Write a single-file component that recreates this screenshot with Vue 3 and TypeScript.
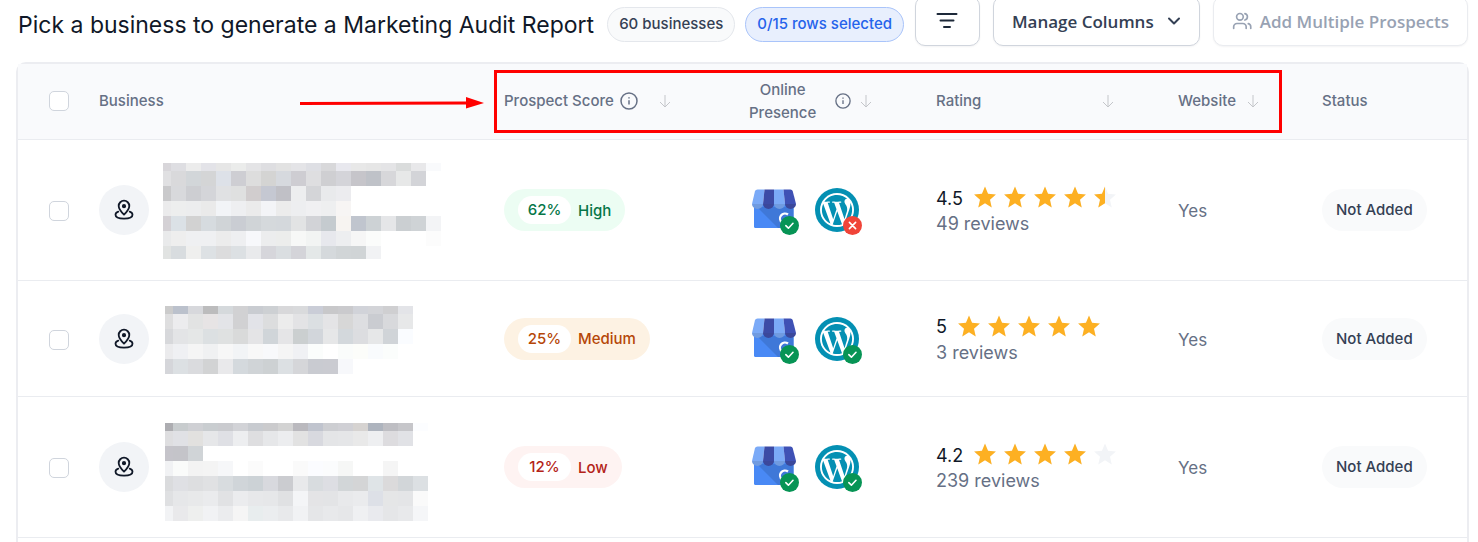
<script setup lang="ts">
import { reactive, ref } from 'vue'

interface Mask {
  x: number
  y: number
  lastHeight: number
  rows: string[]
}

interface Business {
  id: number
  score: number
  level: 'High' | 'Medium' | 'Low'
  wordpressOk: boolean
  rating: number
  reviews: number
  website: string
  status: string
  height: number
  mask: Mask
}

const businesses: Business[] = [
  {
    id: 1, score: 62, level: 'High', wordpressOk: false, rating: 4.5, reviews: 49,
    website: 'Yes', status: 'Not Added', height: 140,
    mask: {
      x: 0, y: 23, lastHeight: 13,
      rows: [
        'd8d6da dedee2 ececec e3e3e8 e6e6e6 ebeceb e4e4e6 dedee1 e2e2e2 e4e4e7 dedfe4 d8d8da e8e8ee e8e8e8 e6e6e6 e4e4e6 dadcdc e8e8ea f9fafc',
        'e0e0e2 d9d9db d2d6d9 d4d5d6 dde1e8 ceced3 dddddd d4d4d3 d6d9de cecdd2 dedee0 cfcfd2 d4d4d9 c6c5ca bfc2c8 d7d7da e7e8e8 d3d4d8',
        'c9c9cb d8d9dc cdced2 d4d5d9 e0e1e3 dfe0e0 d1cdce c5c8d2 c0c0c6 edeeef d4d5d8 e9eaec ececef',
        'ebebec edeeee ecedee eaeaea f2f4f7 eeeff1 ebebeb f3f4f7 ececec edeef0 f0f0f2 eeeff0 f7f5f4',
        'd4d1d5 dbe1e6 d2d2d2 d6dbdf d0d4d7 cacdd3 d0d4d7 d5d9dc d4d8dc e2e3e4 d2d3d7 c5cbcf f7f4f1 c0c5ce cdd2d5 e5e6e8 cbcfd2 cfd3d6 f3f4f6',
        'e9eaeb eeeeee eff0f2 eff0f2 ececec eeeff1 f7f8fb ecedee ecedec f7f8f7 f2f4f3 e7e8ed edeef0 f6f6f6 fbfcfb - - - fcfcfc',
        'e1e3e2 d8dcdf efefee dde1e4 dcdcdd dce0e3 e9eaec d6d6db dadee1 d4d4d9 e4e8e8 d5d9dc d1d5d7 d0d4d6 f1f2f4',
      ],
    },
  },
  {
    id: 2, score: 25, level: 'Medium', wordpressOk: true, rating: 5, reviews: 3,
    website: 'Yes', status: 'Not Added', height: 115,
    mask: {
      x: 2, y: 25, lastHeight: 15,
      rows: [
        'cbcbcb bbc1cc d7d8dc bcbcbd d5d9dc d1d1d3 c9ccd1 cdd0d3 d8d8da d9dadc cacdd7 c8c8ca cacacd d1d3d9 d3d4d8 cfcfd1 e3e4e8',
        'dededf ececee e2e3e3 e7e4e5 e3e4e8 d1d1d3 e2e3e8 dcddde ececec e3e3e5 dbdfe2 e4e4e6 d7d7d7 dddee1 caccd1 d8d9dc e7e8e9',
        'd7d8db e3e4e6 e5e7e7 dce0e2 dfe1e1 d9dada e4e4e6 d0d5d9 e5e5e7 cbcfd0 d2d6db e6e7e8 d3d8dc dcdde0 e6e7e8 d0d4d8 fafcff',
        'ebebed eff0f3 f5f5f5 f0f1f2 f7f7f7 f2f4f6 f8f8f8 f8f9fb f5f5f5 f0f1f4 fbfdfc ffffff fafcfb fcfdfa f9fbfd fbfdfc',
        'd5d6da dce0e3 dadbde d2d3d4 e9e9eb d4d9dd d0d4d7 cdd1d3 dce0e3 d5d6d9 c9cbd1 cacbd1 f7f8fb',
      ],
    },
  },
  {
    id: 3, score: 12, level: 'Low', wordpressOk: true, rating: 4.2, reviews: 239,
    website: 'Yes', status: 'Not Added', height: 140,
    mask: {
      x: 2, y: 26, lastHeight: 15,
      rows: [
        'adadb1 c8ccce cfd0d4 c9cdd0 cacbcf d2d3d7 c8cbd0 cbcbcd d3d3d3 bab9be c0c4ce cdced2 d0d0d5 d6d3d1 aeb4be bebec3 c6c6ca fcfdff',
        'dedee0 e0e1e5 e2e1df e6e7e9 dfe0e5 edeef0 dedee0 e6e7e9 ecedef e2e2e2 d8d9df e4e5e7 e5e6e8 e9e9e9 eeeff1 dddcdf e1e2e6',
        'c5c4ca c4c4c9 d0d4d7',
        'f1f2f4 fafbfa f3f3f3 f4f4f4 f6f7f9 - fbfbfb - - fafafa fbfcff fbfcfd f6f7f6 - - f5f5f5',
        'dadbdd dfe0e4 dddee0 e0e1e3 d8dcdf d0d5d9 ccd2d6 d8d9de cbccd0 e8e9eb d8dcdf dddee3 d2d6d8 d4d5d6 dfe4e7 dbdadb d2d6d9 dce0e3',
        'dfe0e2 e6e7e9 e8e9ea eaebed e1e2e4 ebecee e7e8ea e6e7e9 e0e1e3 f4f5f7 e4e4e6 e3e4e6 e8e9eb eaebed dde0e7 e5e6e7 e4e5e7 fafafa',
        'f2f3f5 e9e9eb eeefee f1f2f4 ebecee f5f5f5 e8edee ebedef e8e9eb f1f2f4 e5e6e8 e8e9eb e6e7e9 eff0f2 e9eaee e5e6e8 e8e9eb f5f6f8',
      ],
    },
  },
]

const maskTiles = (mask: Mask) =>
  mask.rows.flatMap((row, r) =>
    row.split(' ').map((color, c) => ({
      key: `${r}-${c}`,
      x: mask.x + (c ? c * 15 - 7 : 0),
      y: mask.y + (r ? r * 15 - 7 : 0),
      w: c ? 15 : 8,
      h: r === 0 ? 8 : r === mask.rows.length - 1 ? mask.lastHeight : 15,
      fill: color === '-' ? 'none' : `#${color}`,
    })),
  )

const starFill = (rating: number, n: number) => {
  const part = rating - n + 1
  return part >= 1 ? 24 : part >= 0.5 ? 12 : 0
}

const star = 'M12 0.6 15.3 8.4 23.8 9.2 17.4 14.8 19.3 23.2 12 18.8 4.7 23.2 6.6 14.8 0.2 9.2 8.7 8.4Z'

const allSelected = ref(false)
const selected = reactive<Record<number, boolean>>({})
</script>

<template>
  <main class="page">
    <header class="toolbar">
      <h1>Pick a business to generate a Marketing Audit Report</h1>
      <span class="chip">60 businesses</span>
      <span class="chip chip-blue">0/15 rows selected</span>
      <div class="actions">
        <button type="button" class="btn btn-filter" aria-label="Filter">
          <svg width="24" height="24" viewBox="0 0 24 24" fill="none" stroke="#1d2939" stroke-width="2" stroke-linecap="round"><path d="M2.5 5h19M5.5 11.500h13M9 18h6" /></svg>
        </button>
        <button type="button" class="btn btn-columns">
          Manage Columns
          <svg width="14" height="14" viewBox="0 0 14 14" fill="none" stroke="#344054" stroke-width="2" stroke-linecap="round" stroke-linejoin="round"><path d="M2 4.5 7 9.5 12 4.5" /></svg>
        </button>
        <button type="button" class="btn btn-add" disabled>
          <svg width="20" height="20" viewBox="0 0 24 24" fill="none" stroke="#98a2b3" stroke-width="2" stroke-linecap="round" stroke-linejoin="round"><path d="M17 21v-2a4 4 0 0 0-4-4H6a4 4 0 0 0-4 4v2M22.500 21v-2a4 4 0 0 0-3-3.870M15.500 3.130a4 4 0 0 1 0 7.750" /><circle cx="9.500" cy="7" r="4" /></svg>
          Add Multiple Prospects
        </button>
      </div>
    </header>

    <section class="card">
      <svg class="pointer" width="184" height="14" viewBox="0 0 184 14"><path d="M0 7.500 167 7" stroke="#f00" stroke-width="3" /><path d="M166 1 184 7 166 12.500Z" fill="#f00" /></svg>
      <div class="highlight"></div>
      <table>
        <colgroup>
          <col class="c-check" /><col /><col class="c-score" /><col class="c-online" /><col class="c-rating" /><col class="c-website" /><col class="c-status" />
        </colgroup>
        <thead>
          <tr>
            <th class="check"><input v-model="allSelected" type="checkbox" aria-label="Select all rows" /></th>
            <th>Business</th>
            <th>
              <div class="head">
                Prospect Score
                <svg class="info info-lg" viewBox="0 0 18 18"><circle cx="9" cy="9" r="8" /><path d="M9 8.200v4.300M9 5.200v1.300" /></svg>
                <svg class="sort sort-score" viewBox="0 0 12 14"><path d="M6 1v12M1 8l5 5 5-5" /></svg>
              </div>
            </th>
            <th>
              <div class="head">
                <span class="two-line">Online<br />Presence</span>
                <svg class="info info-sm" viewBox="0 0 18 18"><circle cx="9" cy="9" r="8" /><path d="M9 8.200v4.300M9 5.200v1.300" /></svg>
                <svg class="sort sort-online" viewBox="0 0 12 14"><path d="M6 1v12M1 8l5 5 5-5" /></svg>
              </div>
            </th>
            <th>
              <div class="head head-rating">
                Rating
                <svg class="sort" viewBox="0 0 12 14"><path d="M6 1v12M1 8l5 5 5-5" /></svg>
              </div>
            </th>
            <th>
              <div class="head">
                Website
                <svg class="sort sort-website" viewBox="0 0 12 14"><path d="M6 1v12M1 8l5 5 5-5" /></svg>
              </div>
            </th>
            <th>Status</th>
          </tr>
        </thead>
        <tbody>
          <tr v-for="b in businesses" :key="b.id">
            <td class="check"><input v-model="selected[b.id]" type="checkbox" :aria-label="`Select row ${b.id}`" /></td>
            <td>
              <div class="business">
                <span class="avatar">
                  <svg width="22" height="22" viewBox="0 0 22 22" fill="none" stroke="#101828" stroke-width="1.800" stroke-linecap="round" stroke-linejoin="round">
                    <path d="M11 15.600C8 12.700 5.700 10 5.700 7a5.300 5.300 0 0 1 10.600 0c0 3-2.300 5.700-5.300 8.600Z" />
                    <circle cx="11" cy="7.200" r="1.200" fill="#101828" />
                    <path d="M5.300 12.600C3.300 13.300 2.500 14.500 2.500 15.700c0 2.400 3.600 3.900 8.500 3.900s8.500-1.500 8.500-3.900c0-1.200-.8-2.400-2.800-3.100" />
                  </svg>
                </span>
                <svg class="mask" width="280" :height="b.height" shape-rendering="crispEdges" aria-hidden="true">
                  <rect v-for="t in maskTiles(b.mask)" :key="t.key" :x="t.x" :y="t.y" :width="t.w" :height="t.h" :fill="t.fill" />
                </svg>
              </div>
            </td>
            <td>
              <span class="score" :class="b.level.toLowerCase()"><span class="percent">{{ b.score }}%</span>{{ b.level }}</span>
            </td>
            <td>
              <div class="presence">
                <span class="logo">
                  <svg width="44" height="44" viewBox="0 0 44 44">
                    <path d="M2 16h39.500v22.500q0 1.500-1.500 1.500H3.500Q2 40 2 38.500Z" fill="#4989f5" />
                    <path d="M5 19h36.500v19.500q0 1.500-1.500 1.500H26Z" fill="#3f78d8" />
                    <path d="M36 26.500a5 5 0 1 0 1 7h-5" fill="none" stroke="#fff" stroke-width="2.200" />
                    <path d="M5.500 1.500h7L11 16H0L3 3q.6-1.500 2.500-1.500Z" fill="#7baaf7" />
                    <path d="M12.500 1.500H22V16H11Z" fill="#3c4ba6" />
                    <path d="M22 1.500h9.500L33 16H22Z" fill="#7baaf7" />
                    <path d="M31.500 1.500h7q1.700 0 2.200 1.500L44 16H33Z" fill="#3f51b5" />
                    <path d="M0 16h11a5.500 5 0 0 1-11 0ZM22 16h11a5.500 5 0 0 1-11 0Z" fill="#709be0" />
                    <path d="M11 16h11a5.500 5 0 0 1-11 0ZM33 16h11a5.500 5 0 0 1-11 0Z" fill="#3b489b" />
                  </svg>
                  <svg class="badge" viewBox="0 0 19 19"><circle cx="9.500" cy="9.500" r="9.500" fill="#079455" /><path d="m5.800 9.700 2.600 2.500 4.600-4.900" fill="none" stroke="#fff" stroke-width="1.600" stroke-linecap="round" stroke-linejoin="round" /></svg>
                </span>
                <span class="logo">
                  <svg width="44" height="44" viewBox="0 0 44 44">
                    <circle cx="22" cy="22" r="22" fill="#0490b3" />
                    <circle cx="22" cy="22" r="17" fill="#fff" />
                    <path transform="translate(5.200 5.200) scale(1.400)" fill="#0490b3" d="M21.469 6.825c.84 1.537 1.318 3.300 1.318 5.175 0 3.979-2.156 7.456-5.363 9.325l3.295-9.527c.615-1.540.820-2.771.820-3.864 0-.405-.026-.780-.070-1.110m-7.981.105c.647-.030 1.232-.105 1.232-.105.582-.075.514-.930-.067-.899 0 0-1.755.135-2.880.135-1.064 0-2.850-.150-2.850-.150-.585-.030-.661.855-.075.885 0 0 .540.061 1.125.090l1.680 4.605-2.370 7.080L5.354 6.900c.649-.030 1.234-.100 1.234-.100.585-.075.516-.930-.065-.896 0 0-1.746.138-2.874.138-.200 0-.438-.008-.690-.015C4.911 3.150 8.235 1.215 12 1.215c2.809 0 5.365 1.072 7.286 2.833-.046-.003-.091-.009-.141-.009-1.060 0-1.812.923-1.812 1.914 0 .890.513 1.643 1.060 2.531.411.720.890 1.643.890 2.977 0 .915-.354 1.994-.821 3.479l-1.075 3.585-3.900-11.610zM12 22.784c-1.059 0-2.081-.153-3.048-.437l3.237-9.406 3.315 9.087c.024.053.050.101.078.149-1.120.393-2.325.609-3.582.609M1.211 12c0-1.564.336-3.050.935-4.390L7.290 21.709C3.694 19.960 1.212 16.271 1.211 12" />
                  </svg>
                  <svg class="badge" viewBox="0 0 19 19">
                    <circle cx="9.500" cy="9.500" r="9.500" :fill="b.wordpressOk ? '#079455' : '#f04438'" />
                    <path :d="b.wordpressOk ? 'm5.800 9.700 2.600 2.500 4.600-4.900' : 'm6.400 6.400 6.200 6.200m0-6.200-6.200 6.200'" fill="none" stroke="#fff" stroke-width="1.600" stroke-linecap="round" stroke-linejoin="round" />
                  </svg>
                </span>
              </div>
            </td>
            <td class="rating-cell">
              <div class="rating">
                <span class="value">{{ b.rating }}</span>
                <span class="stars">
                  <svg v-for="n in 5" :key="n" width="24" height="24" viewBox="-1 0 26 26">
                    <clipPath :id="`fill-${b.id}-${n}`"><rect x="0" y="0" :width="starFill(b.rating, n)" height="24" /></clipPath>
                    <path :d="star" fill="#f2f4f7" />
                    <path :d="star" fill="#fdb022" :clip-path="`url(#fill-${b.id}-${n})`" />
                  </svg>
                </span>
              </div>
              <div class="reviews">{{ b.reviews }} reviews</div>
            </td>
            <td class="website">{{ b.website }}</td>
            <td><span class="status">{{ b.status }}</span></td>
          </tr>
        </tbody>
      </table>
    </section>
  </main>
</template>

<style>
body {
  margin: 0;
  background: #fff;
}
</style>

<style scoped>
* {
  box-sizing: border-box;
}

.page {
  display: flex;
  flex-direction: column;
  min-height: 100vh;
  padding: 0 9px 0 16px;
  overflow: hidden;
  font-family: Inter, "Liberation Sans", sans-serif;
  color: #101828;
}

svg {
  display: block;
  flex: none;
}

.toolbar {
  display: flex;
  align-items: center;
  height: 50px;
  margin: -4px 0 16px;
  padding: 0 1px 0 2px;
  white-space: nowrap;
}

h1 {
  margin: 8px 13px 0 0;
  font-size: 23px;
  line-height: 32px;
  font-weight: 400;
}

.chip {
  height: 35px;
  margin: 7px 10px 0 0;
  padding: 0 11px;
  border: 1px solid #e4e7ec;
  border-radius: 18px;
  background: #f9fafb;
  color: #344054;
  font-size: 15px;
  line-height: 32px;
  font-weight: 500;
}

.chip-blue {
  border-color: #a9c4fa;
  background: #e8effd;
  color: #2563eb;
}

.actions {
  display: flex;
  gap: 13px;
  margin-left: auto;
}

.btn {
  display: flex;
  align-items: center;
  justify-content: center;
  height: 50px;
  padding: 0 18px;
  border: 1px solid #d0d5dd;
  border-radius: 10px;
  background: #fff;
  box-shadow: 0 1px 2px rgba(16, 24, 40, 0.05);
  color: #344054;
  font-family: "Open Sans", "Noto Sans", sans-serif;
  font-size: 17px;
  font-weight: 600;
}

.btn-filter {
  width: 65px;
}

.btn-columns {
  gap: 13px;
}

.btn-add {
  gap: 8px;
  border-color: #eaecf0;
  color: #98a2b3;
}

.card {
  position: relative;
  flex: 1;
  border: 2px solid #ecedf1;
  border-bottom: 0;
  border-radius: 10px 10px 0 0;
}

.highlight {
  position: absolute;
  top: 6px;
  right: 185px;
  width: 788px;
  height: 63px;
  border: 3px solid #f00;
}

.pointer {
  position: absolute;
  top: 32px;
  right: 983px;
}

table {
  width: 100%;
  border-collapse: separate;
  border-spacing: 0;
  table-layout: fixed;
}

.c-check { width: 81px; }
.c-score { width: 245px; }
.c-online { width: 187px; }
.c-rating { width: 242px; }
.c-website { width: 144px; }
.c-status { width: 145px; }

th,
td {
  padding: 0;
  border-bottom: 1px solid #eaecf0;
  text-align: left;
  vertical-align: middle;
}

th {
  height: 76px;
  padding-bottom: 2px;
  background: #f9fafc;
  color: #667085;
  font-size: 15px;
  line-height: 23px;
  font-weight: 500;
}

.check {
  padding-left: 31px;
}

td.check,
td.rating-cell,
td.website {
  padding-top: 2px;
}

input {
  display: block;
  appearance: none;
  width: 20px;
  height: 20px;
  margin: 0;
  border: 1px solid #d0d5dd;
  border-radius: 5px;
  background: #fff;
}

input:checked {
  border-color: #2563eb;
  background: #2563eb;
}

.head {
  display: flex;
  align-items: center;
}

.head-rating {
  justify-content: space-between;
  padding-right: 64px;
}

.two-line {
  text-align: center;
}

.info {
  fill: none;
  stroke: #667085;
  stroke-width: 1.5;
}

.info-lg {
  width: 18px;
  height: 18px;
  margin-left: 6px;
}

.info-sm {
  width: 16px;
  height: 16px;
  margin-left: 19px;
}

.sort {
  width: 12px;
  height: 14px;
  fill: none;
  stroke: #c4c6ca;
}

.sort-score { margin-left: 21px; }
.sort-online { margin-left: 9px; }
.sort-website { margin-left: 11px; }

.business {
  display: flex;
  align-items: center;
  gap: 14px;
  overflow: hidden;
}

.avatar {
  display: flex;
  flex: none;
  align-items: center;
  justify-content: center;
  width: 50px;
  height: 50px;
  border-radius: 50%;
  background: #f2f4f7;
}

.score {
  display: inline-flex;
  align-items: center;
  gap: 7px;
  height: 42px;
  padding: 0 14px;
  border-radius: 21px;
  font-size: 15px;
  font-weight: 500;
}

.percent {
  width: 53px;
  border-radius: 14px;
  background: #fff;
  line-height: 28px;
  text-align: center;
}

.high { background: #ecfdf3; color: #067647; }
.medium { background: #fdf2e3; color: #b54708; }
.low { background: #fef3f2; color: #b42318; }

.presence {
  display: flex;
  gap: 19px;
  padding-left: 3px;
}

.logo {
  position: relative;
}

.badge {
  position: absolute;
  right: -3px;
  bottom: -3px;
  width: 19px;
  height: 19px;
}

.rating {
  display: flex;
  align-items: center;
  gap: 10px;
  height: 26px;
}

.value {
  font-size: 18px;
}

.stars {
  display: flex;
  gap: 6px;
}

.reviews {
  color: #667085;
  font-size: 18px;
  line-height: 26px;
}

.website {
  color: #667085;
  font-size: 17px;
  line-height: 26px;
}

.status {
  display: inline-block;
  padding: 0 14px;
  border-radius: 21px;
  background: #f9fafb;
  color: #344054;
  font-size: 15px;
  line-height: 42px;
  font-weight: 500;
}
</style>
